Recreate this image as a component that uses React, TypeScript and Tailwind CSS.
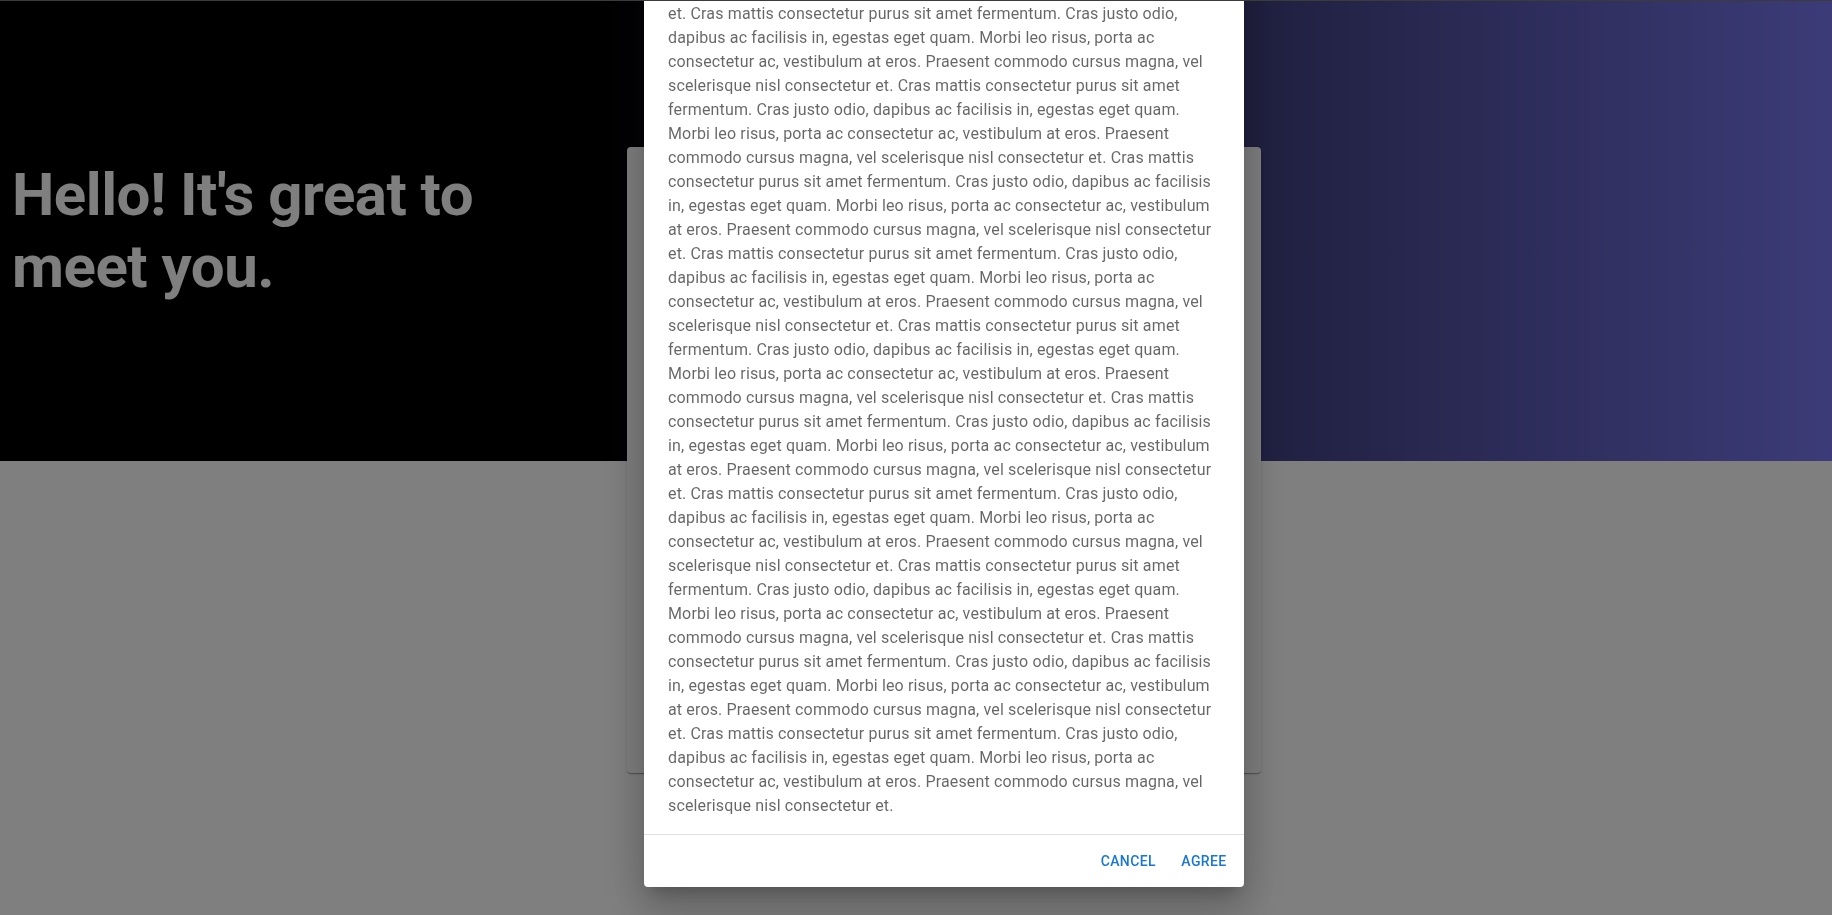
import React from "react";

const REP =
  "Cras mattis consectetur purus sit amet fermentum. Cras justo odio, dapibus ac facilisis in, egestas eget quam. Morbi leo risus, porta ac consectetur ac, vestibulum at eros. Praesent commodo cursus magna, vel scelerisque nisl consectetur et.";

export default function App() {
  const text = Array.from({ length: 50 }, () => REP).join(" ");
  return (
    <div className="min-h-screen bg-white font-['Roboto','Liberation_Sans',sans-serif]">
      <section className="flex h-[461px] items-center bg-[linear-gradient(to_right,#000_32%,#7877f0)] pl-[12px]">
        <h1 className="w-[500px] text-[60px] font-bold leading-[72px] tracking-[-0.5px] text-white">
          Hello! It's great to meet you.
        </h1>
      </section>

      <div className="relative -mt-[314px] flex justify-center pl-[56px]">
        <div className="h-[626px] w-[634px] rounded bg-white shadow-[0px_2px_1px_-1px_rgba(0,0,0,0.2),0px_1px_1px_0px_rgba(0,0,0,0.14),0px_1px_3px_0px_rgba(0,0,0,0.12)]" />
      </div>

      <div className="fixed inset-0 bg-black/50" />

      <div className="fixed inset-0 flex flex-col items-center justify-end overflow-hidden pb-[28px] pl-[56px]">
        <div
          role="dialog"
          className="flex w-[600px] shrink-0 flex-col rounded bg-white shadow-[0px_11px_15px_-7px_rgba(0,0,0,0.2),0px_24px_38px_3px_rgba(0,0,0,0.14),0px_9px_46px_8px_rgba(0,0,0,0.12)]"
        >
          <h2 className="px-6 py-4 text-xl font-medium leading-8 tracking-[0.15px] text-black/90">
            Subscribe
          </h2>
          <div className="border-y border-[#e0e0e0] px-6 py-4">
            <p className="text-base leading-6 tracking-[0.15px] text-black/60">{text}</p>
          </div>
          <div className="flex items-center justify-end gap-2 p-2">
            <button className="min-w-16 rounded px-2 py-[6px] text-sm font-medium uppercase leading-[24.5px] tracking-[0.4px] text-[#1976d2]">
              Cancel
            </button>
            <button className="min-w-16 rounded px-2 py-[6px] text-sm font-medium uppercase leading-[24.5px] tracking-[0.4px] text-[#1976d2]">
              Agree
            </button>
          </div>
        </div>
      </div>

      <div className="fixed inset-x-0 top-0 h-px bg-[#3b3b3b]" />
    </div>
  );
}
